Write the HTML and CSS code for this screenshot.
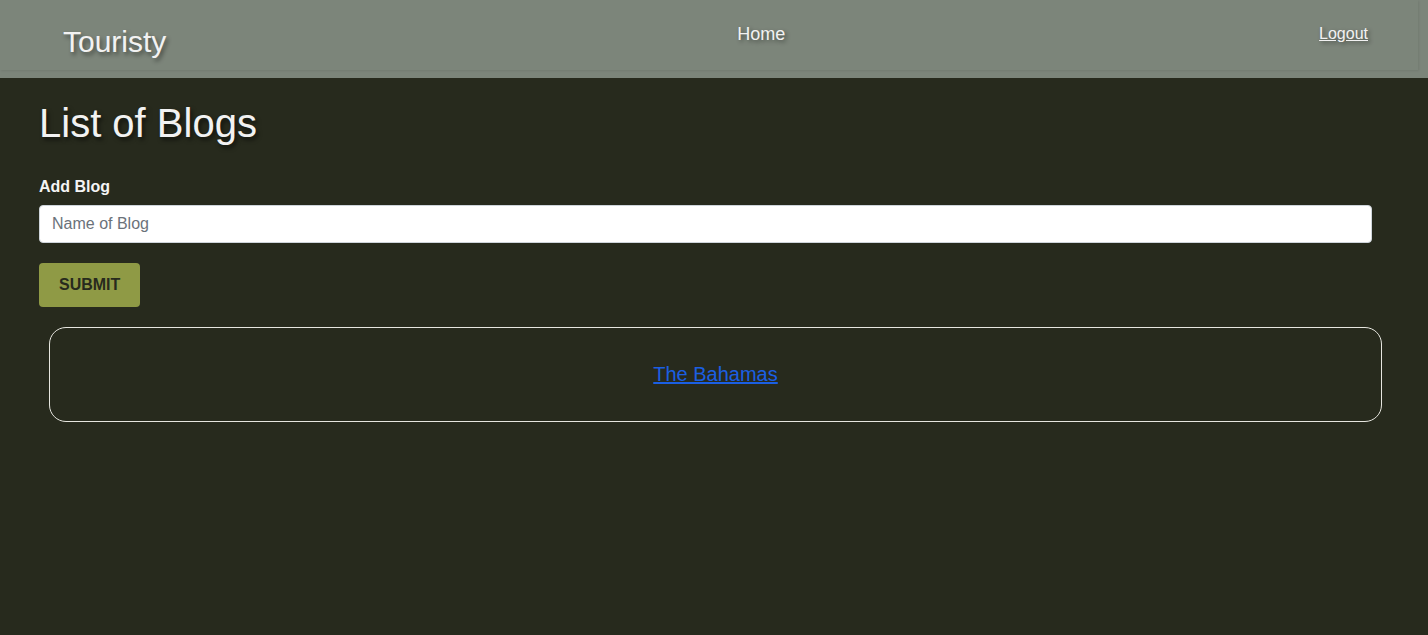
FILE: index.html
```html
<!DOCTYPE html>
<html lang="en">
<head>
<meta charset="utf-8">
<title>Touristy</title>
<link rel="stylesheet" href="styles.css">
</head>
<body>
<header class="header">
  <nav class="navbar">
    <a class="brand" href="#">Touristy</a>
    <a class="nav-home" href="#">Home</a>
    <a class="nav-logout" href="#">Logout</a>
  </nav>
</header>
<main class="main">
  <h1 class="title">List of Blogs</h1>
  <form class="blog-form">
    <label class="form-label" for="blogName">Add Blog</label>
    <input class="form-input" id="blogName" type="text" placeholder="Name of Blog">
    <button class="submit-btn" type="button">SUBMIT</button>
  </form>
  <div class="blog-card">
    <a class="blog-link" href="#">The Bahamas</a>
  </div>
</main>
</body>
</html>
```
FILE: styles.css
```css
html, body {
  margin: 0;
  padding: 0;
}
body {
  background: #272a1d;
  font-family: "Liberation Sans", Arial, sans-serif;
  color: #f4f4f4;
  min-height: 635px;
}
.header {
  background: #7c857a;
  height: 78px;
  padding-right: 10px;
  box-sizing: border-box;
}
.navbar {
  height: 70px;
  display: flex;
  align-items: flex-start;
  padding: 0 50px 0 63px;
  box-shadow: 1px 1px 2px rgba(0,0,0,0.08);
  background: #7c857a;
}
.brand {
  font-size: 30px;
  line-height: 34px;
  margin-top: 25px;
  color: #f2f2f2;
  text-decoration: none;
  text-shadow: 2px 3px 4px rgba(0,0,0,0.45);
}
.nav-home {
  margin-left: 571px;
  margin-top: 23px;
  font-size: 18px;
  line-height: 22px;
  color: #f2f2f2;
  text-decoration: none;
  text-shadow: 2px 2px 4px rgba(0,0,0,0.45);
}
.nav-logout {
  margin-left: auto;
  margin-top: 24px;
  font-size: 16px;
  line-height: 20px;
  color: #f2f2f2;
  text-decoration: underline;
  text-shadow: 2px 2px 4px rgba(0,0,0,0.45);
}
.main {
  padding: 21px 56px 0 39px;
}
.title {
  margin: 0 0 28px;
  font-size: 40px;
  line-height: 48px;
  font-weight: 400;
  color: #f2f2f2;
  text-shadow: 2px 3px 4px rgba(0,0,0,0.55);
}
.blog-form {
  display: flex;
  flex-direction: column;
  align-items: flex-start;
}
.form-label {
  font-size: 16px;
  line-height: 24px;
  font-weight: 700;
  color: #f4f4f4;
  margin-bottom: 6px;
}
.form-input {
  box-sizing: border-box;
  width: 100%;
  height: 38px;
  padding: 6px 12px;
  font-family: "Liberation Sans", Arial, sans-serif;
  font-size: 16px;
  color: #212529;
  background: #fff;
  border: 1px solid #ced4da;
  border-radius: 4px;
  margin: 0;
}
.form-input::placeholder {
  color: #6b727a;
}
.submit-btn {
  margin-top: 20px;
  box-sizing: border-box;
  height: 44px;
  padding: 0 20px;
  background: #8f9a45;
  border: none;
  border-radius: 4px;
  font-family: "Liberation Sans", Arial, sans-serif;
  font-size: 16px;
  font-weight: 700;
  color: #272a1d;
  line-height: 24px;
}
.blog-card {
  margin: 20px -10px 0 10px;
  padding: 31px 16px 30px;
  border: 1px solid #e6e6df;
  border-radius: 17px;
  text-align: center;
  line-height: 30px;
}
.blog-link {
  font-size: 20px;
  color: #1b5fe3;
  text-decoration: underline;
}
```
